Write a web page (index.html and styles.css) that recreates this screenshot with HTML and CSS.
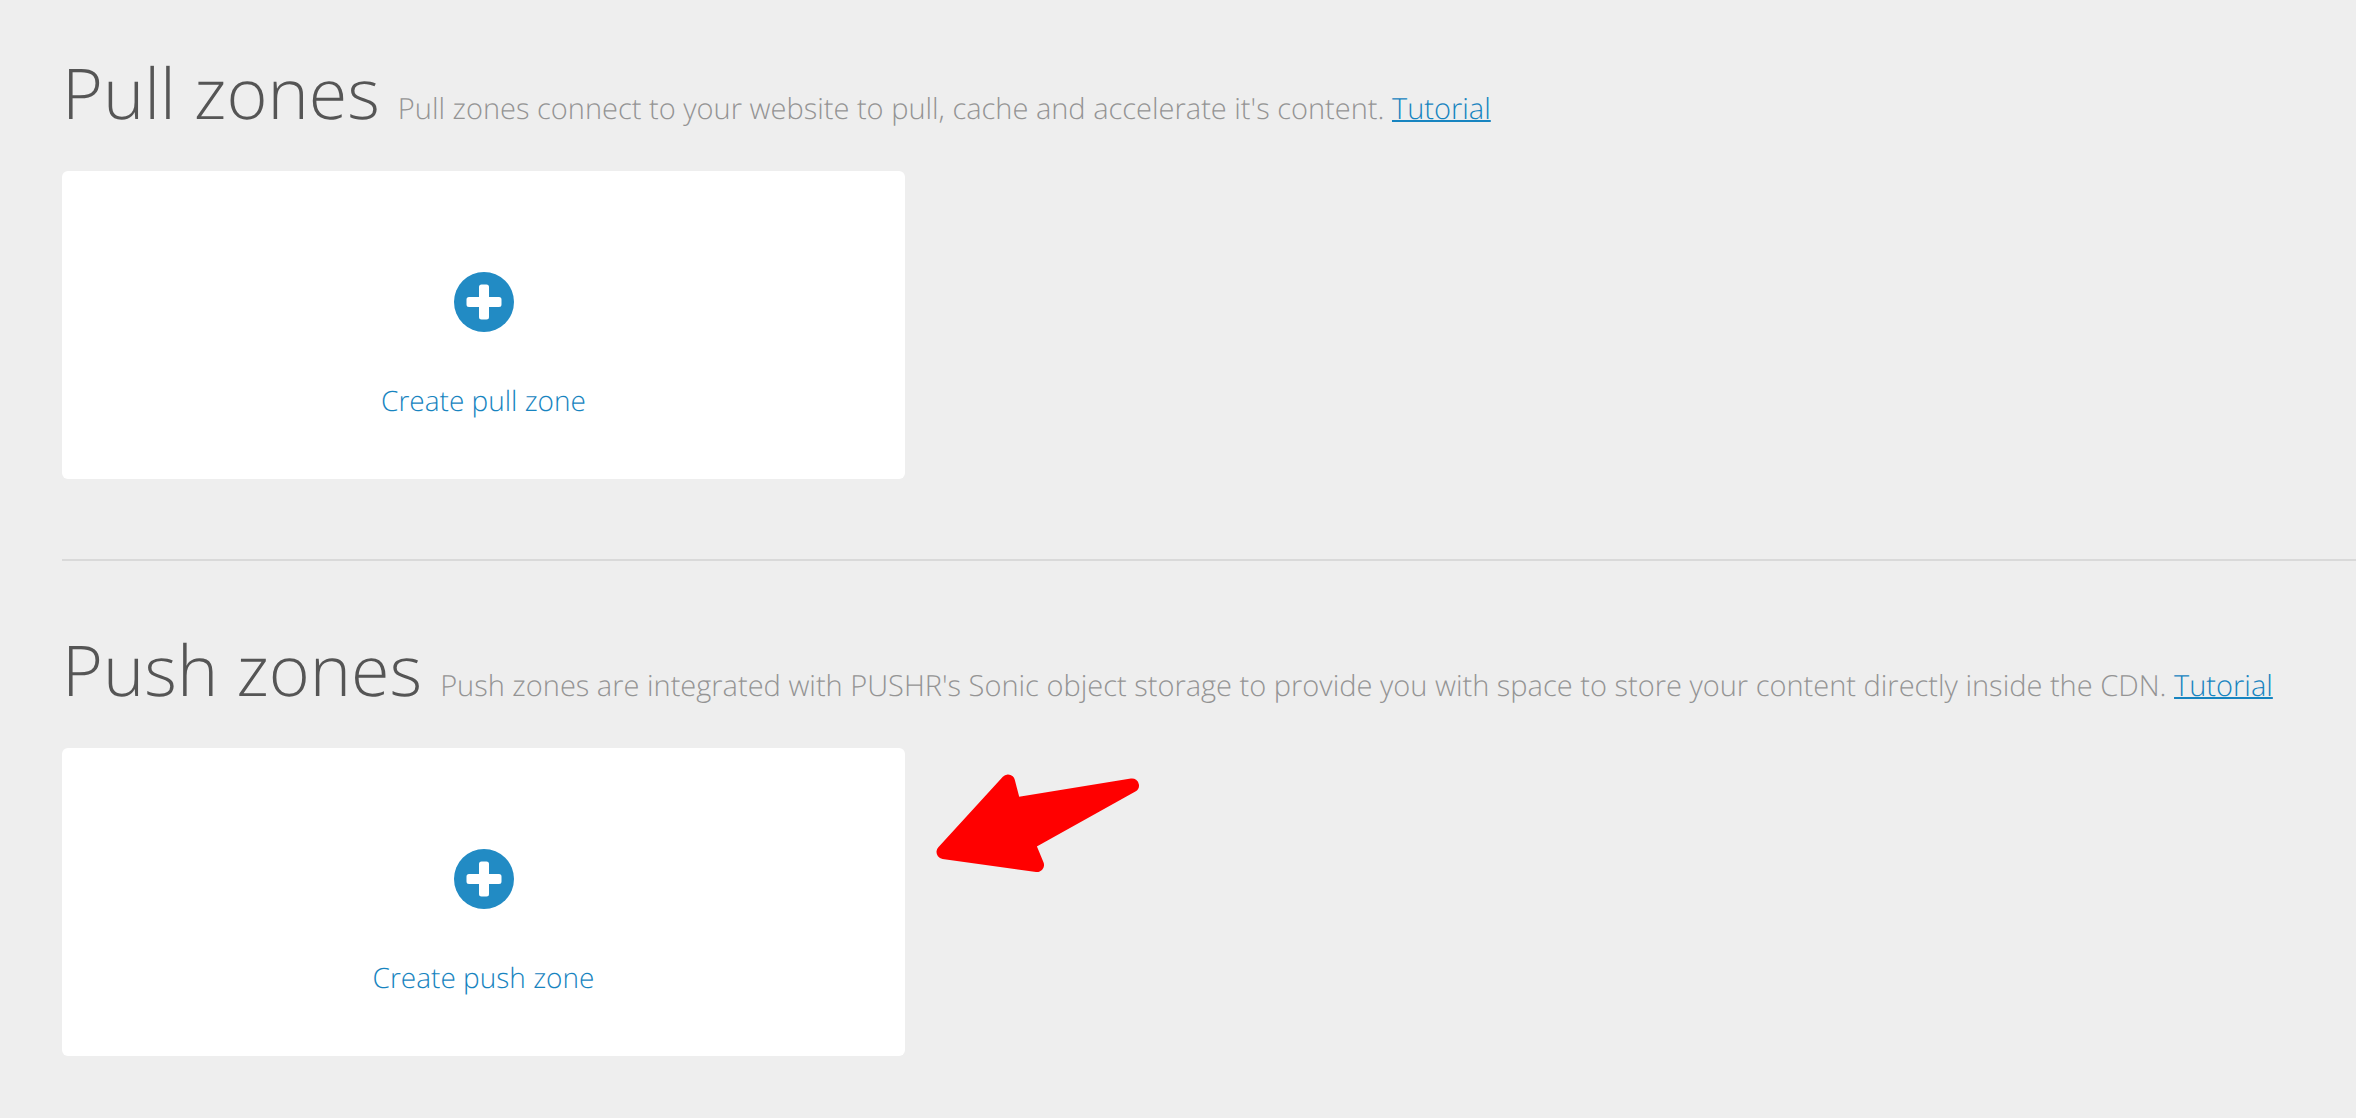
FILE: index.html
```html
<!DOCTYPE html>
<html lang="en">
<head>
<meta charset="utf-8">
<title>Zones</title>
<link rel="stylesheet" href="styles.css">
</head>
<body>
<main class="page">
  <section class="zone">
    <header class="zone-header">
      <h1 class="zone-title">Pull zones</h1>
      <p class="zone-text">Pull zones connect to your website to pull, cache and accelerate it's content. <a class="tutorial" href="#">Tutorial</a></p>
    </header>
    <div class="zone-body">
      <a class="card" href="#">
        <svg class="plus" viewBox="0 0 60 60" aria-hidden="true"><circle cx="30" cy="30" r="30"/><path d="M27.500 15h5v12.500h12.500v5h-12.500v12.500h-5v-12.500h-12.500v-5h12.500z"/></svg>
        <span>Create pull zone</span>
      </a>
    </div>
  </section>
  <hr class="divider">
  <section class="zone">
    <header class="zone-header">
      <h1 class="zone-title">Push zones</h1>
      <p class="zone-text">Push zones are integrated with PUSHR's Sonic object storage to provide you with space to store your content directly inside the CDN. <a class="tutorial" href="#">Tutorial</a></p>
    </header>
    <div class="zone-body">
      <a class="card" href="#">
        <svg class="plus" viewBox="0 0 60 60" aria-hidden="true"><circle cx="30" cy="30" r="30"/><path d="M27.500 15h5v12.500h12.500v5h-12.500v12.500h-5v-12.500h-12.500v-5h12.500z"/></svg>
        <span>Create push zone</span>
      </a>
      <svg class="arrow" viewBox="935 773 206 101" aria-hidden="true"><path d="M943.500 852L1008 781.500L1014 804.600L1132 785.500L1028 843.300L1037 865Z"/></svg>
    </div>
  </section>
</main>
</body>
</html>
```
FILE: styles.css
```css
* { box-sizing: border-box; }
body {
  margin: 0;
  background: #eee;
  color: #555;
  font-family: "Open Sans", sans-serif;
  font-weight: 300;
  text-rendering: geometricPrecision;
}
.page { padding: 42px 0 62px 62px; }
.zone-header {
  display: flex;
  align-items: baseline;
  gap: 18px;
  min-height: 129px;
}
.zone-title {
  margin: 0;
  font-size: 70px;
  font-weight: 300;
  line-height: 100px;
  white-space: nowrap;
}
.zone-text { margin: 0; color: #949494; font-size: 29px; line-height: 40px; }
.tutorial { color: #1784c0; text-decoration-thickness: 2px; }
.zone-body { display: flex; gap: 30px; align-items: flex-start; }
.card {
  display: flex;
  flex-direction: column;
  align-items: center;
  gap: 49px;
  width: 843px;
  min-height: 308px;
  padding-top: 101px;
  border-radius: 6px;
  background: #fff;
  color: #1784c0;
  font-size: 28px;
  line-height: 40px;
  text-decoration: none;
}
.plus { width: 60px; height: 60px; fill: #228bc4; }
.plus path { fill: #fff; stroke: #fff; stroke-width: 5px; stroke-linejoin: round; }
.divider { margin: 80px 0 58px; border: 0; border-top: 2px solid #d9d9d9; }
.arrow {
  width: 206px;
  height: 101px;
  margin-top: 25px;
  fill: #f00;
  stroke: #f00;
  stroke-width: 14px;
  stroke-linejoin: round;
}
```
